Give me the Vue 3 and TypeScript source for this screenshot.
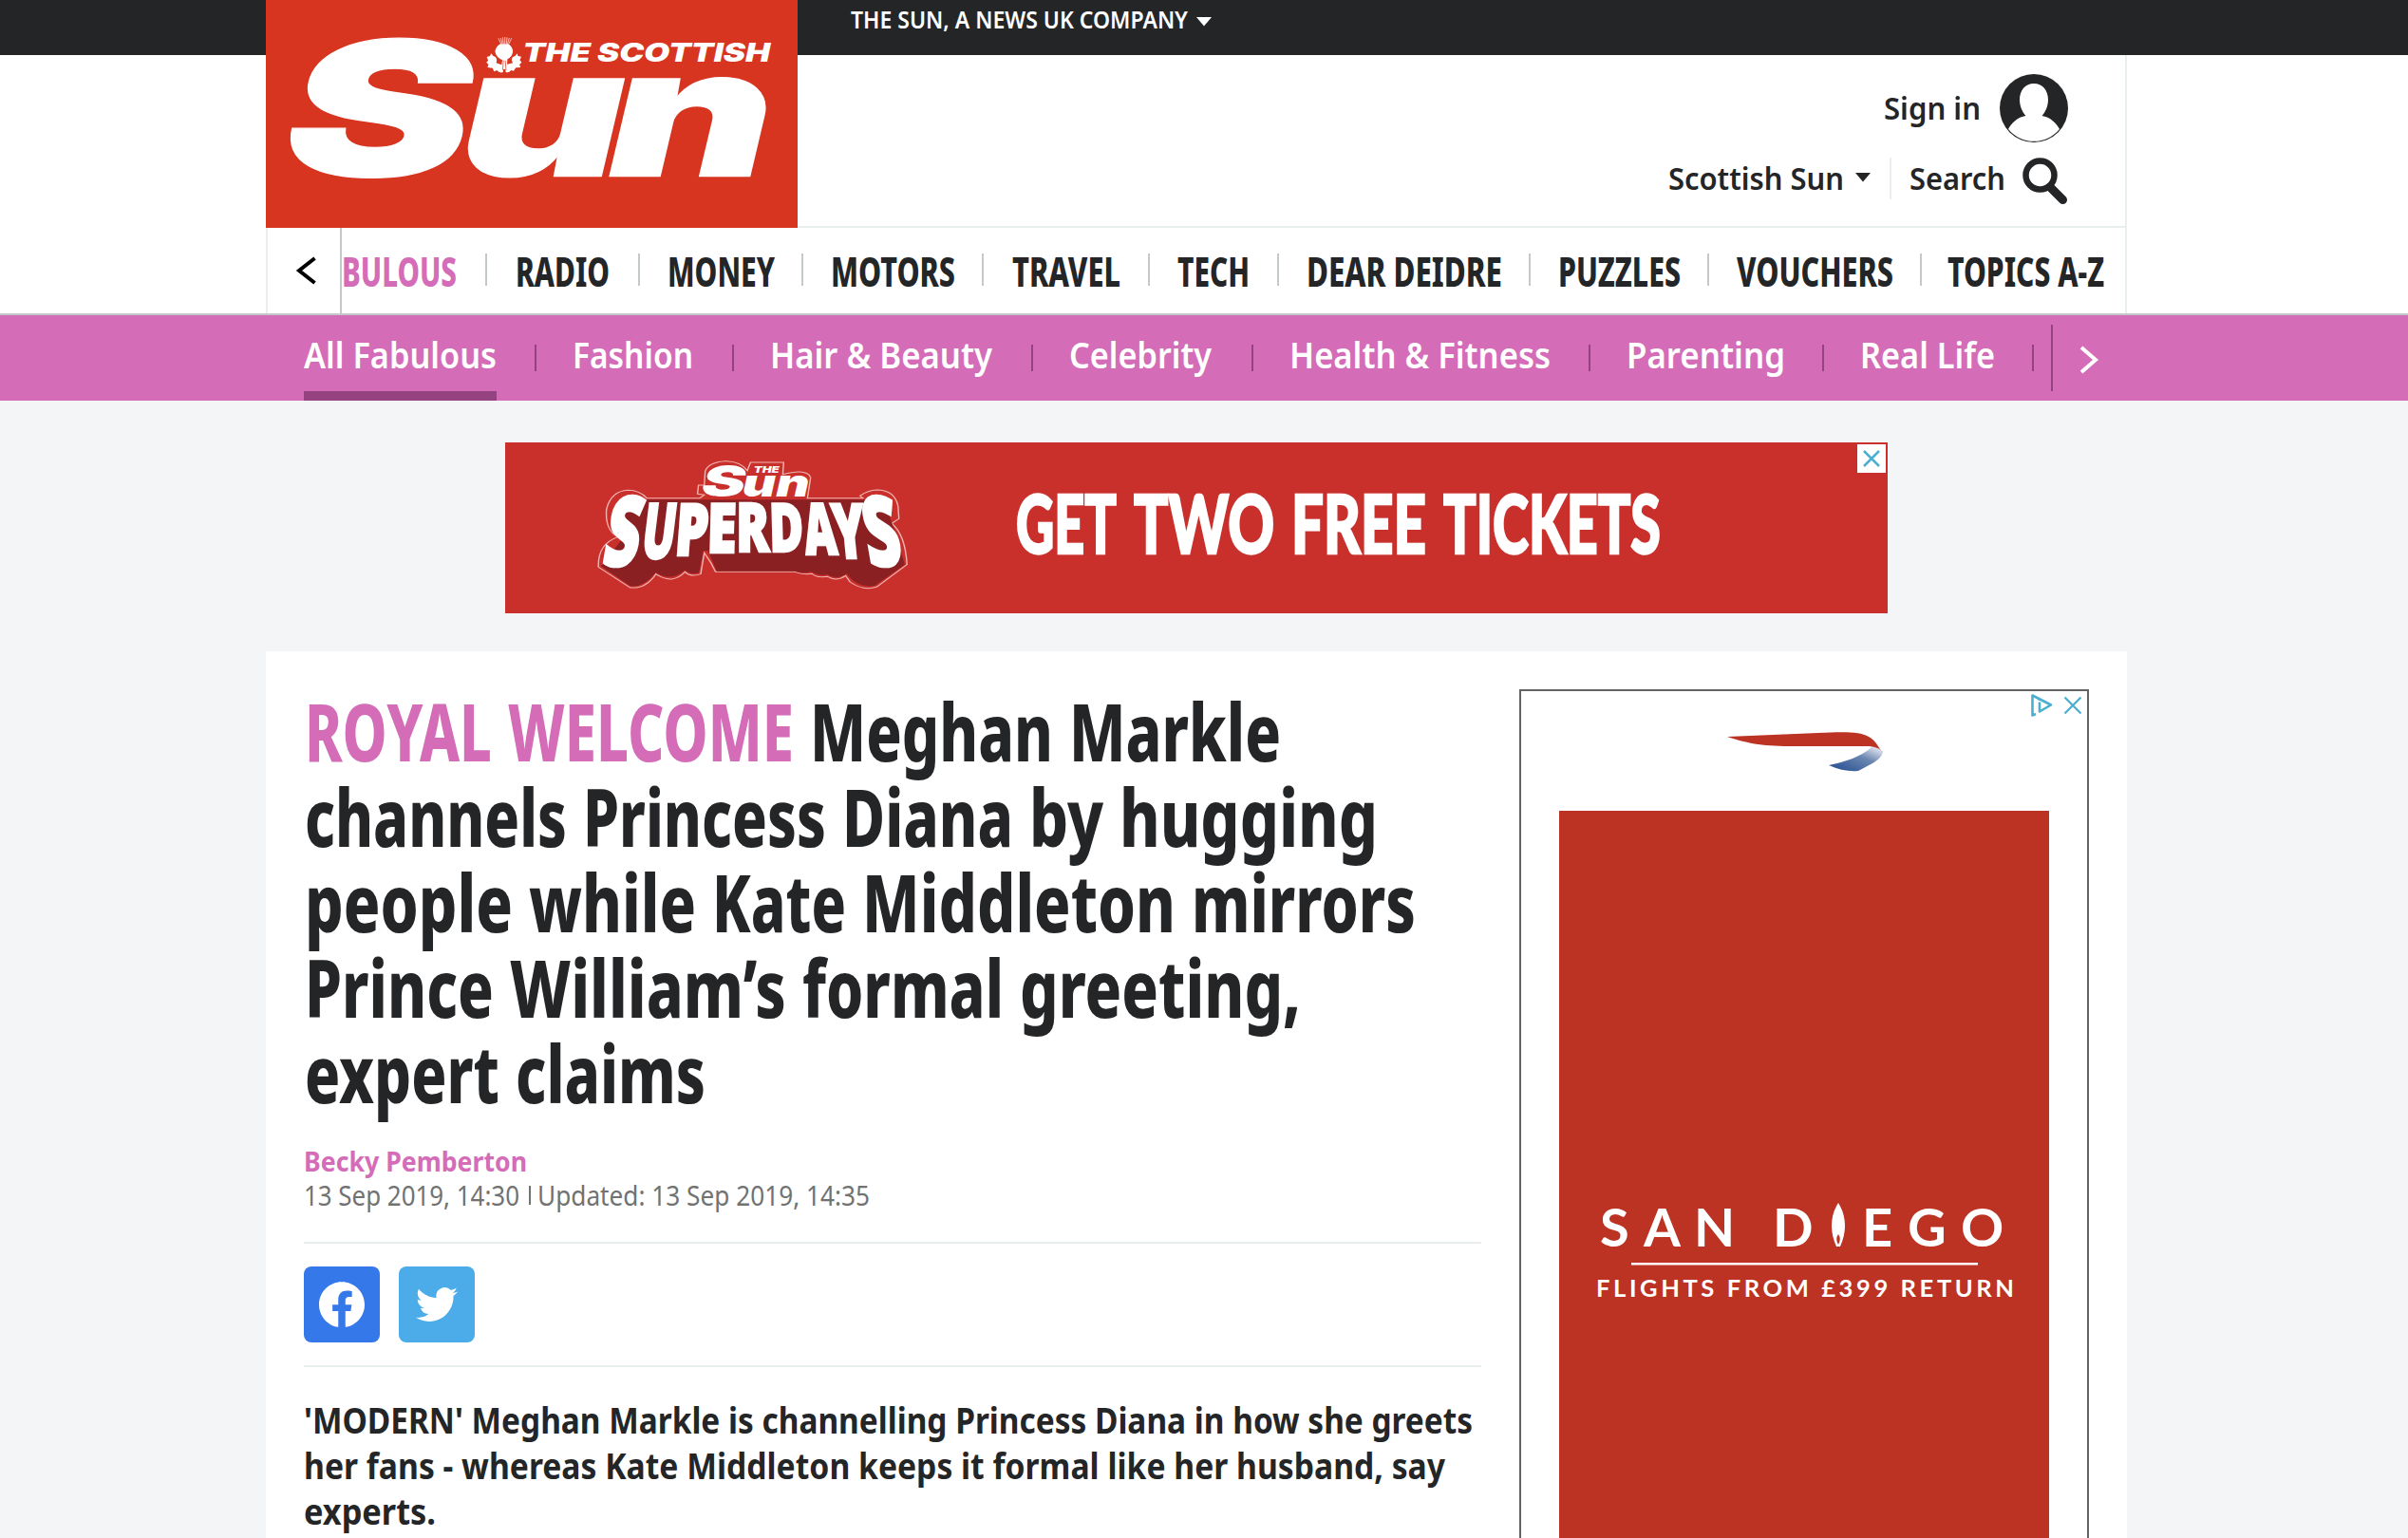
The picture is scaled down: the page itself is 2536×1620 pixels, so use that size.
<script setup lang="ts">

import {h} from "vue";

interface FitProps {
  text: string
  w: number
  h: number
  base: number
}

interface NavItem {
  label: string
  w: number
  cell: number
}

interface Word {
  text: string
  w: number
  kicker?: boolean
}

// one piece of text, squeezed to a fixed width like the condensed brand fonts
function Fit(props: FitProps) {
  return h('svg', {width: props.w, height: props.h}, [
    h('text', {
      x: 0,
      y: props.base,
      textLength: props.w,
      lengthAdjust: 'spacingAndGlyphs'
    }, props.text)
  ])
}
Fit.props = ['text', 'w', 'h', 'base']

const sections: NavItem[] = [
  {label: 'RADIO', w: 99, cell: 161},
  {label: 'MONEY', w: 113, cell: 172},
  {label: 'MOTORS', w: 131, cell: 190},
  {label: 'TRAVEL', w: 114, cell: 175},
  {label: 'TECH', w: 76, cell: 136},
  {label: 'DEAR DEIDRE', w: 206, cell: 265},
  {label: 'PUZZLES', w: 129, cell: 188},
  {label: 'VOUCHERS', w: 165, cell: 224},
  {label: 'TOPICS A-Z', w: 165, cell: 221}
]

const topics: NavItem[] = [
  {label: 'All Fabulous', w: 203, cell: 245},
  {label: 'Fashion', w: 127, cell: 170},
  {label: 'Hair & Beauty', w: 234, cell: 277},
  {label: 'Celebrity', w: 150, cell: 194},
  {label: 'Health & Fitness', w: 275, cell: 317},
  {label: 'Parenting', w: 167, cell: 208},
  {label: 'Real Life', w: 142, cell: 183}
]

const headline: Word[][] = [
  [{text: 'ROYAL', w: 197, kicker: true}, {text: 'WELCOME', w: 301, kicker: true}, {text: 'Meghan', w: 256}, {text: 'Markle', w: 223}],
  [{text: 'channels', w: 276}, {text: 'Princess', w: 256}, {text: 'Diana', w: 180}, {text: 'by', w: 78}, {text: 'hugging', w: 272}],
  [{text: 'people', w: 219}, {text: 'while', w: 176}, {text: 'Kate', w: 141}, {text: 'Middleton', w: 330}, {text: 'mirrors', w: 236}],
  [{text: 'Prince', w: 199}, {text: 'William’s', w: 291}, {text: 'formal', w: 212}, {text: 'greeting,', w: 296}],
  [{text: 'expert', w: 205}, {text: 'claims', w: 200}]
]

const lead: Word[] = [
  {text: "'MODERN' Meghan Markle is channelling Princess Diana in how she greets", w: 1231},
  {text: 'her fans - whereas Kate Middleton keeps it formal like her husband, say', w: 1202},
  {text: 'experts.', w: 139}
]

const bannerWords: Word[] = [
  {text: 'GET', w: 106},
  {text: 'TWO', w: 148},
  {text: 'FREE', w: 142},
  {text: 'TICKETS', w: 229}
]

// arched wordmark: every letter has its own box, tallest at both ends
const superdays = [
  {c: 'S', x: 238, y: 440, w: 80, size: 306, skew: -7},
  {c: 'U', x: 326, y: 416, w: 74, size: 242, skew: -5},
  {c: 'P', x: 402, y: 406, w: 74, size: 228, skew: -3},
  {c: 'E', x: 475, y: 397, w: 66, size: 216, skew: -1},
  {c: 'R', x: 541, y: 394, w: 74, size: 212, skew: 0},
  {c: 'D', x: 616, y: 394, w: 76, size: 212, skew: 1},
  {c: 'A', x: 697, y: 402, w: 72, size: 224, skew: 4},
  {c: 'Y', x: 762, y: 414, w: 72, size: 240, skew: 4},
  {c: 'S', x: 838, y: 440, w: 80, size: 306, skew: 7}
]

</script>

<template>
  <div class="page">
    <header>
      <div class="topBar">
        <Fit class="company" text="THE SUN, A NEWS UK COMPANY" :w="355" :h="30" :base="24"/>
        <svg class="caret" width="16" height="10"><path d="M0 0H16L8 9.500Z"/></svg>
      </div>

      <svg class="logo" width="560" height="240" viewBox="26.100 0 1463.400 720" preserveAspectRatio="none">
        <rect x="26" y="0" width="1465" height="720" fill="#d83520"/>
        <g class="sunLetters">
          <text x="80" y="557" font-size="592" textLength="513" lengthAdjust="spacingAndGlyphs">S</text>
          <text x="561" y="557" font-size="564" textLength="454" lengthAdjust="spacingAndGlyphs">u</text>
          <text x="970" y="557" font-size="564" textLength="454" lengthAdjust="spacingAndGlyphs">n</text>
        </g>
        <text class="scottish" x="733" y="196" font-size="80" textLength="681" lengthAdjust="spacingAndGlyphs">THE SCOTTISH</text>
        <g fill="#fff">
          <path d="M666 121L673 138M672 120L677 138M678 118L680 138M684 117V138M690 118L688 138M696 120L691 138M702 121L695 138" stroke="#fff" stroke-width="2"/>
          <path d="M671 139H694Q705 148 706 163Q704 180 691 187L690 203L706 199C702 192 701 185 706 180L712 177L718 169L720 177L729 179L725 190L730 197L724 204L727 213L714 214L708 224L701 222Q695 231 686 228V219H679V228Q668 232 662 222L654 226L650 215L636 213L639 204L633 197L638 191L634 180L643 177L646 169L652 177L658 180Q664 188 660 199L675 205L677 190Q659 181 657 163Q659 147 671 139Z"/>
          <path d="M680 191L678 221M685 191L687 221" stroke="#d83520" stroke-width="2"/>
        </g>
      </svg>

      <div class="masthead">
        <div class="tools">
          <div class="signIn">
            <Fit class="toolText" text="Sign in" :w="102" :h="34" :base="29"/>
            <svg width="72" height="72" viewBox="0 0 72 72">
              <circle cx="36" cy="36" r="36" fill="#242527"/>
              <path fill="#fff" d="M36 10C45 10 51 17 51 27C51 34 48 40 44.500 44C53 45 60 52 63 58A34.800 34.800 0 0 1 9 58C12 52 19 45 27.500 44C24 40 21 34 21 27C21 17 27 10 36 10Z"/>
            </svg>
          </div>
          <div class="searchRow">
            <Fit class="toolText" text="Scottish Sun" :w="185" :h="34" :base="27"/>
            <svg class="editionCaret" width="16" height="10"><path d="M0 0H16L8 9.500Z"/></svg>
            <span class="toolLine"></span>
            <Fit class="toolText" text="Search" :w="101" :h="34" :base="27"/>
            <svg class="magnifier" width="48" height="50" viewBox="0 0 48 50">
              <circle cx="18.500" cy="18.500" r="15" fill="none" stroke="#242527" stroke-width="6.500"/>
              <path d="M29 31L42.500 44.500" stroke="#242527" stroke-width="9" stroke-linecap="round"/>
            </svg>
          </div>
        </div>
      </div>

      <nav class="mainNav">
        <div class="navInner">
          <button class="prev" type="button">
            <svg width="22" height="30" viewBox="0 0 22 30"><path d="M19.500 2L3 15L19.500 28" fill="none" stroke="#000" stroke-width="4"/></svg>
          </button>
          <ul>
            <li class="current"><Fit class="section" text="BULOUS" :w="121" :h="40" :base="32"/></li>
            <li v-for="item in sections" :key="item.label" :style="{width: item.cell + 'px'}">
              <span class="bar"></span>
              <Fit class="section" :text="item.label" :w="item.w" :h="40" :base="32"/>
            </li>
          </ul>
        </div>
      </nav>

      <nav class="subNav">
        <div class="subInner">
          <ul>
            <li v-for="(item, i) in topics" :key="item.label" :class="{active: i === 0}" :style="{width: item.cell + 'px'}">
              <a><Fit :text="item.label" :w="item.w" :h="40" :base="28"/></a>
              <span class="bar"></span>
            </li>
          </ul>
          <button class="next" type="button">
            <svg width="22" height="30" viewBox="0 0 22 30"><path d="M3 2L18 15L3 28" fill="none" stroke="#fff" stroke-width="4"/></svg>
          </button>
        </div>
      </nav>
    </header>

    <aside class="banner">
      <svg class="superdays" width="333" height="139" viewBox="225 100 705 417" preserveAspectRatio="none">
        <path class="outline" d="M470 215L455 212L457 184H470L472 140Q480 110 520 108Q552 110 566 138L573 112H647L645 150Q700 130 707 160L700 225H824L817 218Q835 200 855 199Q895 200 902 250L904 290L888 305Q918 340 922 435L855 505Q825 520 795 490L785 470Q765 490 745 473Q720 478 710 464Q690 468 672 458H495L485 430L470 398L462 465Q440 476 427 458Q400 500 362 465Q340 512 305 508L234 443Q232 370 277 348Q248 325 252 260Q262 203 300 200Q325 200 342 225H460Z"/>
        <path class="depth" d="M240 440L305 503Q335 508 362 460Q395 490 427 453Q440 468 458 461L468 392H478L498 456H672Q690 464 708 458Q725 472 745 467Q765 484 788 464Q810 510 850 502L917 435L895 330L870 230H280L300 330Z"/>
        <text class="sunSmall" x="464" y="220" font-size="136" textLength="98" lengthAdjust="spacingAndGlyphs">S</text>
        <text class="sunSmall" x="555" y="220" font-size="122" textLength="150" lengthAdjust="spacingAndGlyphs">un</text>
        <text class="sunThe" x="580" y="144" font-size="27" textLength="57" lengthAdjust="spacingAndGlyphs">THE</text>
        <g class="arch">
          <text v-for="(l, i) in superdays" :key="i" x="0" y="0" :font-size="l.size" :textLength="l.w"
                lengthAdjust="spacingAndGlyphs" :transform="`translate(${l.x} ${l.y}) skewX(${l.skew})`">{{ l.c }}</text>
        </g>
      </svg>
      <div class="bannerText">
        <Fit v-for="word in bannerWords" :key="word.text" :text="word.text" :w="word.w" :h="90" :base="73"/>
      </div>
      <button class="closeAd" type="button">
        <svg width="18" height="18" viewBox="0 0 18 18"><path d="M1 1L17 17M17 1L1 17" stroke="#4bb0cf" stroke-width="2.500"/></svg>
      </button>
    </aside>

    <main class="article">
      <article>
        <h1>
          <span v-for="(line, i) in headline" :key="i" class="headLine">
            <Fit v-for="word in line" :key="word.text" :class="{kicker: word.kicker}" :text="word.text" :w="word.w" :h="90" :base="65"/>
          </span>
        </h1>
        <div class="byline">
          <Fit class="author" text="Becky Pemberton" :w="235" :h="36" :base="27"/>
          <div class="dates">
            <Fit text="13 Sep 2019, 14:30" :w="227" :h="36" :base="27"/>
            <span class="dateLine"></span>
            <Fit text="Updated: 13 Sep 2019, 14:35" :w="350" :h="36" :base="27"/>
          </div>
        </div>
        <div class="share">
          <a class="facebook">
            <svg width="48" height="48" viewBox="0 0 24 24"><path fill="#fff" d="M24 12.073c0-6.627-5.373-12-12-12s-12 5.373-12 12c0 5.990 4.388 10.954 10.125 11.854v-8.385H7.078v-3.470h3.047V9.430c0-3.007 1.792-4.669 4.533-4.669 1.312 0 2.686.235 2.686.235v2.953H15.830c-1.491 0-1.956.925-1.956 1.874v2.250h3.328l-.532 3.470h-2.796v8.385C19.612 23.027 24 18.062 24 12.073z"/></svg>
          </a>
          <a class="twitter">
            <svg width="44" height="44" viewBox="0 0 24 24"><path fill="#fff" d="M23.953 4.570a10 10 0 01-2.825.775 4.958 4.958 0 002.163-2.723c-.951.555-2.005.959-3.127 1.184a4.920 4.920 0 00-8.384 4.482C7.690 8.095 4.067 6.130 1.640 3.162a4.822 4.822 0 00-.666 2.475c0 1.710.870 3.213 2.188 4.096a4.904 4.904 0 01-2.228-.616v.060a4.923 4.923 0 003.946 4.827 4.996 4.996 0 01-2.212.085 4.936 4.936 0 004.604 3.417 9.867 9.867 0 01-6.102 2.105c-.390 0-.779-.023-1.170-.067a13.995 13.995 0 007.557 2.209c9.053 0 13.998-7.496 13.998-13.985 0-.210 0-.420-.015-.630A9.935 9.935 0 0024 4.590z"/></svg>
          </a>
        </div>
        <div class="lead">
          <Fit v-for="line in lead" :key="line.text" :text="line.text" :w="line.w" :h="48" :base="34"/>
        </div>
      </article>

      <aside class="sideAd">
        <div class="adTop">
          <svg class="ribbon" width="164" height="54" viewBox="0 0 164 54">
            <defs>
              <linearGradient id="ribbonBlue" x1="0" y1="1" x2="1" y2="0">
                <stop offset="0.100" stop-color="#2c5494"/>
                <stop offset="0.600" stop-color="#6b86b0"/>
                <stop offset="0.950" stop-color="#e6e9f1"/>
              </linearGradient>
            </defs>
            <path fill="url(#ribbonBlue)" d="M152 16C142 26 122 32 107 35C118 40 129 42 138 41C151 34 163 29 164 21Q161 16 152 16Z"/>
            <path fill="#bc3223" d="M0 5L96 1C120 0 139 -1 149 5C157 9 160 18 164 22C161 17 155 15 147 15H72C38 15 25 13 0 5Z"/>
          </svg>
          <div class="adIcons">
            <svg width="25" height="26" viewBox="0 0 25 26">
              <path d="M6 22L2.500 23.500V2.500L22 12.500L10 19.500V9.500" fill="none" stroke="#4bb0cf" stroke-width="2.600" stroke-linejoin="round"/>
              <circle cx="9.500" cy="6.800" r="1.300" fill="#4bb0cf"/>
            </svg>
            <svg width="18" height="18" viewBox="0 0 18 18"><path d="M0.500 0.500L17.500 17.500M17.500 0.500L0.500 17.500" stroke="#4bb0cf" stroke-width="2.300"/></svg>
          </div>
        </div>
        <div class="poster">
          <svg width="516" height="130" viewBox="1642 1256 516 130">
            <text class="city" x="1685 1731 1784 1867" y="1313">SAND</text>
            <path fill="#fff" fill-rule="evenodd" d="M1936 1267C1945 1281 1945 1298 1938 1313H1934C1927 1298 1927 1281 1936 1267ZM1936 1300Q1932.500 1305 1936 1311Q1939.500 1305 1936 1300Z"/>
            <text class="city" x="1961 2009 2065" y="1313">EGO</text>
            <rect x="1718" y="1330" width="365" height="2.500" fill="#fff"/>
            <text class="flights" x="1681" y="1366" textLength="440" lengthAdjust="spacing">FLIGHTS FROM £399 RETURN</text>
          </svg>
        </div>
      </aside>
    </main>
  </div>
</template>

<style>
  body {
    background-color: #f4f5f7;
  }
</style>

<style scoped>
  .page {
    position: relative;
    height: 1620px;
    overflow: hidden;
    color: #242527;
    background-color: #f4f5f7;
    font-family: "Noto Sans", "Open Sans", sans-serif;
  }

  svg {
    display: block;
    flex-shrink: 0;
    overflow: visible;
    fill: currentColor;
  }

  ul {
    display: flex;
    margin: 0;
    padding: 0;
    list-style: none;
  }

  button {
    padding: 0;
    border: none;
    background: none;
  }

  header {
    background-color: white;
  }

  .topBar {
    display: flex;
    gap: 9px;
    height: 58px;
    padding: 6px 0 0 896px;
    box-sizing: border-box;
    color: white;
    background-color: #242527;
  }

  .company {
    font-size: 24.5px;
    font-weight: 650;
  }

  .caret {
    margin-top: 12px;
  }

  .logo {
    position: absolute;
    left: 280px;
    top: 0;
    z-index: 1;
    overflow: hidden;
  }

  .sunLetters {
    font-family: Inter, "Liberation Sans", sans-serif;
    font-weight: 900;
    font-style: italic;
    fill: white;
    stroke: white;
    stroke-width: 4px;
  }

  .scottish {
    font-family: Inter, "Liberation Sans", sans-serif;
    font-weight: 900;
    font-style: italic;
    fill: white;
  }

  .masthead {
    width: 1960px;
    height: 182px;
    margin-left: 280px;
    padding: 20px 60px 0 0;
    box-sizing: border-box;
    border: 2px solid #e9eeee;
    border-top: none;
  }

  .tools {
    display: flex;
    flex-direction: column;
    align-items: flex-end;
    gap: 16px;
  }

  .signIn {
    display: flex;
    align-items: center;
    gap: 20px;
  }

  .searchRow {
    display: flex;
    align-items: flex-start;
  }

  .toolText {
    font-size: 33px;
    font-weight: 620;
  }

  .searchRow .toolText {
    margin-top: 7px;
  }

  .editionCaret {
    margin: 16px 20px 0 12px;
  }

  .toolLine {
    width: 2px;
    height: 44px;
    margin-right: 19px;
    background-color: #e9eeee;
  }

  .magnifier {
    margin-left: 18px;
  }

  .mainNav {
    border-bottom: 2px solid #c3c9c9;
  }

  .navInner {
    display: flex;
    width: 1960px;
    height: 90px;
    margin-left: 280px;
    box-sizing: border-box;
    border-left: 2px solid #e9eeee;
    border-right: 2px solid #e9eeee;
  }

  .prev {
    display: flex;
    flex-shrink: 0;
    width: 78px;
    padding: 30px 0 0 30px;
    border-right: 2px solid #c3c9c9;
  }

  .mainNav ul {
    padding-top: 27px;
  }

  .mainNav li {
    display: flex;
    flex-shrink: 0;
    justify-content: center;
  }

  .mainNav li.current {
    width: 151px;
    justify-content: flex-start;
    color: #d46cb8;
  }

  .mainNav .bar {
    width: 2px;
    height: 34px;
    margin-right: auto;
    background-color: #c3c9c9;
  }

  .section {
    margin: 3px auto 0 0;
    font-size: 42px;
    font-weight: 800;
  }

  .subNav {
    height: 90px;
    color: white;
    background-color: #d46cb8;
  }

  .subInner {
    display: flex;
    align-items: flex-start;
    padding-left: 320px;
    font-size: 37px;
    font-weight: 560;
  }

  .subInner ul {
    gap: 38px;
  }

  .subInner li {
    display: flex;
    justify-content: space-between;
  }

  .subInner a {
    height: 52px;
    padding-top: 28px;
  }

  .subInner .active a {
    border-bottom: 10px solid #954380;
  }

  .subInner .bar {
    width: 2px;
    height: 28px;
    margin-top: 31px;
    background-color: #954380;
  }

  .next {
    height: 70px;
    margin: 10px 0 0 18px;
    padding: 0 0 0 27px;
    border-left: 2px solid #954380;
  }

  .next svg {
    margin-top: 4px;
  }

  .banner {
    display: flex;
    width: 1456px;
    height: 180px;
    margin: 44px 0 40px 532px;
    background-color: #c9302c;
  }

  .superdays {
    margin: 17px 0 0 94px;
  }

  .outline {
    fill: #c9302c;
    stroke: #f0b5b2;
    stroke-width: 3px;
  }

  .depth {
    fill: #8a2022;
  }

  .sunSmall, .sunThe {
    font-family: Inter, "Liberation Sans", sans-serif;
    font-weight: 900;
    font-style: italic;
    fill: white;
  }

  .arch {
    font-weight: 900;
    fill: white;
    stroke: white;
    stroke-width: 8px;
  }

  .bannerText {
    display: flex;
    gap: 18px;
    margin: 44px 0 0 111px;
    color: white;
    font-family: Lato, "Noto Sans", sans-serif;
    font-size: 86px;
    font-weight: 900;
    stroke: white;
    stroke-width: 2.5px;
  }

  .closeAd {
    display: flex;
    align-items: center;
    justify-content: center;
    width: 30px;
    height: 30px;
    margin: 2px 2px 0 auto;
    background-color: white;
  }

  .article {
    display: grid;
    grid-template-columns: 1240px 600px;
    gap: 40px;
    width: 1960px;
    margin-left: 280px;
    padding: 40px;
    box-sizing: border-box;
    background-color: white;
  }

  h1 {
    margin: 0;
    padding: 11px 0 0 1px;
    font-size: 83px;
    font-weight: 800;
  }

  .headLine {
    display: flex;
    gap: 17px;
  }

  .kicker, .author {
    color: #d46cb8;
  }

  .byline {
    margin: 20px 0 29px;
  }

  .author {
    font-size: 28.5px;
    font-weight: 700;
  }

  .dates {
    display: flex;
    color: #717272;
    font-size: 29px;
  }

  .dateLine {
    width: 2px;
    height: 20px;
    margin: 6px 7px 0 10px;
    background-color: #717272;
  }

  .share {
    display: flex;
    gap: 20px;
    padding: 24px 0;
    border-top: 2px solid #e9eeee;
    border-bottom: 2px solid #e9eeee;
  }

  .share a {
    display: flex;
    align-items: center;
    justify-content: center;
    width: 80px;
    height: 80px;
    border-radius: 8px;
  }

  .facebook {
    background-color: #3578e9;
  }

  .twitter {
    background-color: #4cacea;
  }

  .lead {
    margin-top: 36px;
    font-size: 38px;
    font-weight: 700;
  }

  .sideAd {
    height: 1000px;
    box-sizing: border-box;
    padding: 0 40px;
    border: 2px solid #616365;
    background-color: white;
  }

  .adTop {
    display: flex;
    justify-content: space-between;
    height: 126px;
  }

  .ribbon {
    margin: 43px 0 0 177px;
  }

  .adIcons {
    display: flex;
    gap: 11px;
    margin: 2px -34px 0 0;
  }

  .adIcons svg:last-child {
    margin-top: 4px;
  }

  .poster {
    height: 900px;
    padding-top: 402px;
    box-sizing: border-box;
    background-color: #bc3223;
  }

  .city, .flights {
    font-family: Lato, "Open Sans", sans-serif;
    fill: white;
  }

  .city {
    font-size: 56px;
    font-weight: 700;
  }

  .flights {
    font-size: 25.5px;
    font-weight: 700;
  }
</style>
